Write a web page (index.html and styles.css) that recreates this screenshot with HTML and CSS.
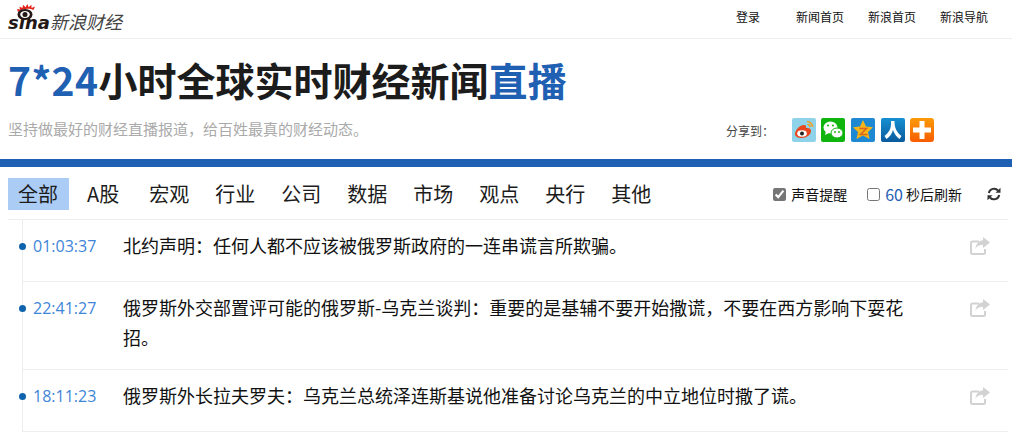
FILE: index.html
```html
<!DOCTYPE html>
<html lang="zh-CN">
<head>
  <meta charset="UTF-8">
  <title>7*24小时全球实时财经新闻直播</title>
  <link rel="stylesheet" href="styles.css">
</head>
<body>
  <div class="top-bar">
    <a class="logo">
      <span class="logo-mark">
        <span class="logo-sina">sina</span>
        <svg class="logo-eye" width="20" height="17" viewBox="0 0 20 17">
          <path d="M1 8 L0 5 L3 5.500 L2.500 2.500 L5.500 4 L6 .8 L8.500 3.200 L10.500 0 L11.500 3.200 L14.500 .8 L14.500 4 L18 2.500 L16.500 6 C13 4 6 4 1 8Z" fill="#e2231a"/>
          <ellipse cx="8" cy="10.500" rx="7.500" ry="5.500" fill="#231815"/>
          <ellipse cx="8" cy="10.500" rx="4.800" ry="3.400" fill="#fff"/>
          <circle cx="8" cy="10.500" r="2.500" fill="#231815"/>
        </svg>
      </span>
      <span class="logo-name">新浪财经</span>
    </a>
    <nav class="top-nav">
      <a class="top-login">登录</a>
      <a>新闻首页</a>
      <a>新浪首页</a>
      <a>新浪导航</a>
    </nav>
  </div>

  <div class="headline">
    <h1><span class="blue">7*24</span>小时全球实时财经新闻<span class="blue">直播</span></h1>
    <div class="sub-row">
      <p class="slogan">坚持做最好的财经直播报道<span class="mid">，</span>给百姓最真的财经动态。</p>
      <div class="share">
        <span class="share-label">分享到<span class="mid">：</span></span>
        <svg class="share-icon" viewBox="0 0 24 24">
          <rect width="24" height="24" rx="2" fill="#8fd3ea"/>
          <path d="M3 16c0-4 5-9 9-9 2 0 2.500 1.500 2 3 3-.5 5 .5 5 3 0 4-5 7-9 7-4 0-7-1.500-7-4z" fill="#e8461c"/>
          <ellipse cx="10" cy="15.500" rx="4.800" ry="3.300" fill="#fff"/>
          <circle cx="10" cy="15.500" r="2" fill="#222"/>
          <path d="M15 3.500c3 0 5.500 2.500 5.500 5.500M15.500 6.500c1.500 0 2.500 1 2.500 2.500" fill="none" stroke="#f0a020" stroke-width="1.500"/>
        </svg>
        <svg class="share-icon" viewBox="0 0 24 24">
          <rect width="24" height="24" rx="2" fill="#0fb40f"/>
          <ellipse cx="9.500" cy="9.500" rx="7" ry="6" fill="#fff"/>
          <path d="M5 13l-1 4 4-2z" fill="#fff"/>
          <ellipse cx="16" cy="15" rx="6" ry="5" fill="#fff" stroke="#0fb40f"/>
          <circle cx="7" cy="7.500" r="1" fill="#0fb40f"/>
          <circle cx="12" cy="7.500" r="1" fill="#0fb40f"/>
          <circle cx="14" cy="14" r=".9" fill="#0fb40f"/>
          <circle cx="18" cy="14" r=".9" fill="#0fb40f"/>
        </svg>
        <svg class="share-icon" viewBox="0 0 24 24">
          <rect width="24" height="24" rx="2" fill="#1e88d2"/>
          <path d="M12 2l3 6.500 7 .8-5 4.700 1.500 7-6.500-3.500-6.500 3.500 1.500-7-5-4.700 7-.8z" fill="#f7b517"/>
          <path d="M8.500 10.500h7l-6 6h7" fill="none" stroke="#d8661c" stroke-width="1.500"/>
        </svg>
        <svg class="share-icon" viewBox="0 0 24 24">
          <defs>
            <linearGradient id="renren" x1="0" y1="0" x2="0" y2="1">
              <stop offset="0" stop-color="#1590d2"/>
              <stop offset="1" stop-color="#0a5a9c"/>
            </linearGradient>
          </defs>
          <rect width="24" height="24" rx="2" fill="url(#renren)"/>
          <path d="M10.500 3h3c0 7 2 11 7 15l-2 3c-3-2-5-5-6.500-9-1 4-3.500 7-6.500 9l-2-3c5-4 7-8 6.500-15z" fill="#fff"/>
        </svg>
        <svg class="share-icon" viewBox="0 0 24 24">
          <defs>
            <linearGradient id="more" x1="0" y1="0" x2="0" y2="1">
              <stop offset="0" stop-color="#fb9a08"/>
              <stop offset="1" stop-color="#f85c00"/>
            </linearGradient>
          </defs>
          <rect width="24" height="24" rx="3" fill="url(#more)"/>
          <path d="M9.500 3h5v6.500H21v5h-6.500V21h-5v-6.500H3v-5h6.500z" fill="#fff"/>
        </svg>
      </div>
    </div>
  </div>

  <div class="tab-bar">
    <ul class="tabs">
      <li class="tab active">全部</li>
      <li class="tab tab-a">A股</li>
      <li class="tab">宏观</li>
      <li class="tab">行业</li>
      <li class="tab">公司</li>
      <li class="tab">数据</li>
      <li class="tab">市场</li>
      <li class="tab">观点</li>
      <li class="tab">央行</li>
      <li class="tab">其他</li>
    </ul>
    <div class="tools">
      <label class="tool"><input type="checkbox" checked>声音提醒</label>
      <label class="tool tool-refresh"><input type="checkbox"><span class="secs">60</span>秒后刷新</label>
      <svg class="refresh" width="14" height="14" viewBox="0 0 14 14">
        <path d="M1.800 6A5.300 5.300 0 0 1 11 3.500M12.200 8A5.300 5.300 0 0 1 3 10.500" fill="none" stroke="#333" stroke-width="2"/>
        <path d="M13.500 .8v5h-5zM.5 13.200v-5h5z" fill="#333"/>
      </svg>
    </div>
  </div>

  <div class="feed">
    <div class="item">
      <span class="time">01:03:37</span>
      <p class="text">北约声明<span class="mid">：</span>任何人都不应该被俄罗斯政府的一连串谎言所欺骗。</p>
      <svg class="forward" viewBox="0 0 20 18"><use href="#fwd"/></svg>
    </div>
    <div class="item">
      <span class="time">22:41:27</span>
      <p class="text">俄罗斯外交部置评可能的俄罗斯-乌克兰谈判<span class="mid">：</span>重要的是基辅不要开始撒谎<span class="mid">，</span>不要在西方影响下耍花招。</p>
      <svg class="forward" viewBox="0 0 20 18"><use href="#fwd"/></svg>
    </div>
    <div class="item">
      <span class="time">18:11:23</span>
      <p class="text">俄罗斯外长拉夫罗夫<span class="mid">：</span>乌克兰总统泽连斯基说他准备讨论乌克兰的中立地位时撒了谎。</p>
      <svg class="forward" viewBox="0 0 20 18"><use href="#fwd"/></svg>
    </div>
  </div>

  <svg class="defs" width="0" height="0">
    <symbol id="fwd" viewBox="0 0 20 18">
      <path d="M9 4.500H2.500a1.500 1.500 0 0 0-1.500 1.500v9.500A1.500 1.500 0 0 0 2.500 17h11a1.500 1.500 0 0 0 1.500-1.500V12" fill="none" stroke="#d2d2d2" stroke-width="2"/>
      <path d="M13 0l7 5.500-7 5.500V7.800c-3.500 0-6 1-7.500 4C5.800 7.500 8.500 3.700 13 3.300z" fill="#d2d2d2"/>
    </symbol>
  </svg>
</body>
</html>
```

FILE: styles.css
```css
/* Base */
* {
  margin: 0;
  padding: 0;
  box-sizing: border-box;
}

html, body {
  height: 434px;
  overflow: hidden;
}

body {
  font-family: 'Noto Sans CJK SC', 'Liberation Sans', sans-serif;
  color: #111;
  background-color: #fff;
}

/* fullwidth colon and comma sit mid-box in the original */
.mid {
  font-family: 'Noto Sans CJK TC', sans-serif;
  line-height: 0;
}

/* Top bar */
.top-bar {
  display: flex;
  justify-content: space-between;
  align-items: flex-start;
  height: 39px;
  padding: 9px 24px 0 8px;
  border-bottom: 1px solid #eee;
}

.logo {
  display: flex;
  margin-top: -5px;
}

.logo-mark {
  position: relative;
  width: 41px;
  height: 30px;
}

.logo-eye {
  position: absolute;
  left: 9px;
  top: 0;
}

.logo-sina {
  position: absolute;
  left: 0;
  top: 8px;
  font-family: 'DejaVu Sans', sans-serif;
  font-size: 18px;
  line-height: 22px;
  font-weight: 700;
  font-style: italic;
  color: #231815;
}

.logo-name {
  margin: 5px 0 0 1px;
  font-size: 18px;
  line-height: 24px;
  font-style: italic;
  color: #444;
  white-space: nowrap;
}

.top-nav {
  display: flex;
  gap: 24px;
  font-size: 12px;
  line-height: 16px;
}

.top-login {
  margin-right: 12px;
}

/* Headline */
.headline {
  height: 128px;
  padding: 14px 0 0 8px;
  border-bottom: 8px solid #1f60b3;
}

h1 {
  font-size: 39px;
  line-height: 52px;
  font-weight: 700;
  color: #1c1c1c;
  white-space: nowrap;
}

h1 .blue {
  letter-spacing: .4px;
}

.blue {
  color: #1f60b3;
}

.sub-row {
  display: flex;
  align-items: center;
  margin-top: 11px;
  height: 28px;
}

.slogan {
  width: 718px;
  margin-bottom: 4px;
  font-size: 15px;
  color: #aaa;
}

.share {
  display: flex;
  align-items: center;
  gap: 5.700px;
}

.share-label {
  width: 60px;
  font-size: 12px;
  color: #444;
}

.share-icon {
  width: 24px;
  height: 24px;
}

/* Tabs */
.tab-bar {
  display: flex;
  justify-content: space-between;
  align-items: center;
  height: 53px;
  margin: 0 4px 0 8px;
  padding: 2px 7px 0 0;
  border-bottom: 1px solid #eee;
}

.tabs {
  display: flex;
  gap: 6px;
  list-style: none;
}

.tab {
  padding: 0 10px;
  height: 32px;
  font-size: 20px;
  line-height: 32px;
  color: #1c1c1c;
}

.tab.active {
  width: 61px;
  background-color: #abcdf5;
}

.tab-a {
  margin: 0 4px 0 2px;
}

.tools {
  display: flex;
  align-items: center;
  font-size: 14px;
}

.tool {
  display: flex;
  align-items: center;
}

.tool input {
  width: 13px;
  height: 13px;
  margin-right: 5px;
  accent-color: #767676;
}

.tool-refresh {
  margin-left: 20px;
}

.secs {
  margin-right: 3px;
  font-size: 16px;
  color: #1f60b3;
}

.refresh {
  margin-left: 25px;
}

/* Feed */
.feed {
  margin: 0 4px 0 22px;
  border-left: 1px solid #eee;
}

.item {
  position: relative;
  display: flex;
  min-height: 62px;
  padding: 11px 0 17px 10px;
  border-bottom: 1px solid #eee;
}

.item::before {
  content: "";
  position: absolute;
  left: -4px;
  top: 23px;
  width: 7px;
  height: 7px;
  border-radius: 50%;
  background-color: #0f64ad;
}

.time {
  flex: none;
  width: 90px;
  font-family: 'Open Sans', sans-serif;
  font-size: 16px;
  line-height: 30px;
  color: #3d85d8;
}

.text {
  width: 790px;
  margin-top: -1px;
  font-size: 18px;
  line-height: 30px;
}

.forward {
  position: absolute;
  right: 18px;
  top: 17px;
  width: 20px;
  height: 18px;
}

.defs {
  position: absolute;
}
```
